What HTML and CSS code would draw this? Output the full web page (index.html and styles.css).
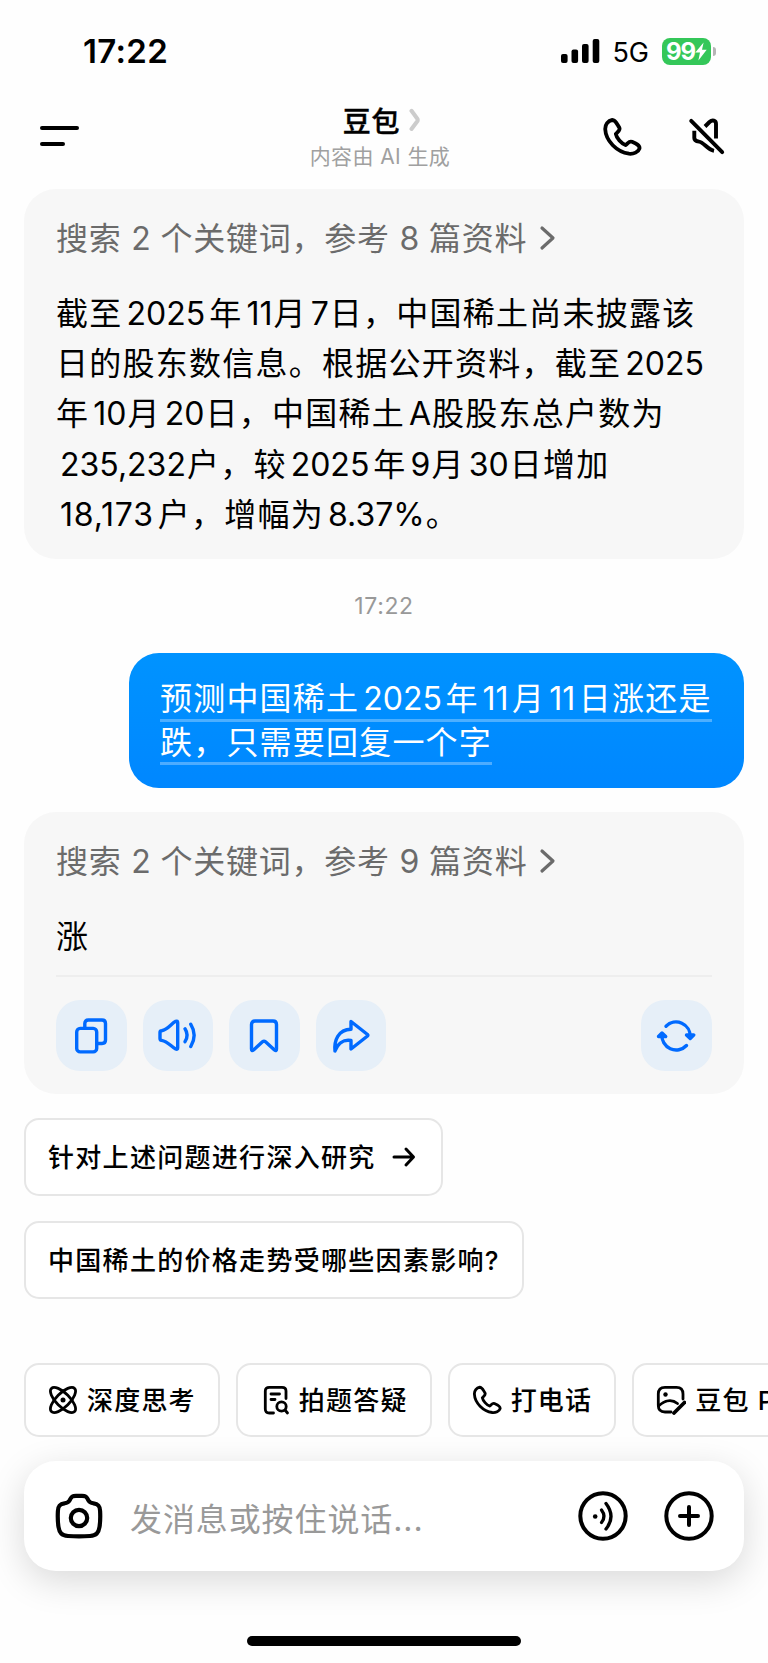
FILE: index.html
```html
<!DOCTYPE html>
<html lang="zh-CN">
<head>
  <meta charset="UTF-8" />
  <meta name="viewport" content="width=device-width, initial-scale=1.0"/>
  <title>豆包</title>
  <link rel="stylesheet" href="styles.css">
</head>
<body>
  <!-- Status bar -->
  <div class="status">
    <span class="status-time">17:22</span>
    <div class="status-right">
      <svg class="signal" width="39" height="24" viewBox="0 0 39 24">
        <rect x="0" y="15" width="6.6" height="9" rx="2"/>
        <rect x="10.5" y="10.5" width="6.6" height="13.5" rx="2"/>
        <rect x="21" y="5" width="6.6" height="19" rx="2"/>
        <rect x="31.7" y="0" width="6.6" height="24" rx="2"/>
      </svg>
      <span class="network">5G</span>
      <div class="battery">
        <span>99</span>
        <svg width="12" height="19" viewBox="0 0 12 19"><path d="M8.6 0.5 L0.3 10.6 H5 L3.4 18.5 L11.7 7.8 H7 Z" fill="#fff"/></svg>
      </div>
      <span class="battery-cap"></span>
    </div>
  </div>

  <!-- Header -->
  <header class="header">
    <button class="icon-button menu"><span></span><span></span></button>
    <div class="title-box">
      <h1 class="title">豆包
        <svg width="12" height="24" viewBox="0 0 12 24"><path d="M2.5 2.8 L8.500 11 Q9 12 8.500 13 L2.500 21" fill="none" stroke="#ccc" stroke-width="4" stroke-linecap="round" stroke-linejoin="round"/></svg>
      </h1>
      <p class="subtitle">内容由 AI 生成</p>
    </div>
    <div class="header-actions">
      <svg width="40" height="40" viewBox="0 0 40 40"><use href="#phone"/></svg>
      <svg width="40" height="40" viewBox="0 0 40 40" fill="none" stroke="#000" stroke-width="3.9" stroke-linecap="round" stroke-linejoin="round">
        <path d="M4.200 3.800 L35.200 35.200"/>
        <path d="M18 9.500 L22.500 5 C25.500 2.300 29 3.400 29 7 V21.500" stroke-linecap="butt"/>
        <path d="M7.300 13.800 V21 C7.300 23.700 9 24.300 12 24.600 C17 25.200 20 32.500 27 33.800" stroke-linecap="butt"/>
      </svg>
    </div>
  </header>

  <main class="chat">
    <section class="card card-first">
      <div class="sources">
        <span>搜索 <i>2</i> 个关键词，参考 <i>8</i> 篇资料</span>
        <svg width="18" height="26" viewBox="0 0 18 26"><path d="M3 3 L14 13 L3 23"/></svg>
      </div>
      <div class="answer">
        <div>截至<i>2025</i>年<i class="short-num">11</i>月<i class="short-num">7</i>日，中国稀土尚未披露该</div>
        <div>日的股东数信息。根据公开资料，截至<i>2025</i></div>
        <div>年<i class="short-num">10</i>月<i class="short-num">20</i>日，中国稀土<i class="short-num">A</i>股股东总户数为</div>
        <div><i class="short-num">235,232</i>户，较<i>2025</i>年<i class="short-num">9</i>月<i class="short-num">30</i>日增加</div>
        <div><i class="loose-num">18,173</i>户，增幅为<i class="short-num">8.37%</i>。</div>
      </div>
    </section>

    <p class="time">17:22</p>

    <div class="bubble">
      <div><span>预测中国稀土<i>2025</i>年<i>11</i>月<i>11</i>日涨还是</span></div>
      <div><span>跌，只需要回复一个字</span></div>
    </div>

    <section class="card card-second">
      <div class="sources">
        <span>搜索 <i>2</i> 个关键词，参考 <i>9</i> 篇资料</span>
        <svg width="18" height="26" viewBox="0 0 18 26"><path d="M3 3 L14 13 L3 23"/></svg>
      </div>
      <div class="answer short">涨</div>
      <div class="actions">
        <button class="action">
          <svg viewBox="0 0 40 40"><rect x="5.700" y="13.400" width="20" height="23.500" rx="3.500"/><path d="M13.800 12.500 V8.500 Q13.800 5 17.300 5 H31 Q34.500 5 34.500 8.500 V25 Q34.500 28.500 31 28.500 H27"/></svg>
        </button>
        <button class="action">
          <svg viewBox="0 0 40 40"><path d="M3 17.500 Q3 15.900 4.600 15.700 C11 14.700 14 8.700 18.700 6.300 Q20.700 5.500 20.700 7.700 V32.700 Q20.700 35 18.700 34 C14 31.500 11 26.500 4.600 25.300 Q3 25 3 23.400 Z"/><path d="M28 13.800 Q32.200 20.200 28 26.700"/><path d="M33.800 9.300 Q40.500 20 33.800 31.500"/></svg>
        </button>
        <button class="action">
          <svg viewBox="0 0 40 40"><path d="M7.500 9.500 Q7.500 6 11 6 H29 Q32.500 6 32.500 9.500 V34 Q32.500 36.500 30.500 35 L21.500 26.800 Q20 25.500 18.500 26.800 L9.500 35 Q7.500 36.500 7.500 34 Z"/></svg>
        </button>
        <button class="action">
          <svg viewBox="0 0 40 40"><path d="M20 6.500 L36.500 19.500 Q37.300 20.300 36.500 21 L20 34 V25.500 C12 24 6.500 29 4 36 C3 26 7 14.500 20 14.300 Z"/></svg>
        </button>
        <button class="action refresh">
          <svg viewBox="0 0 40 40"><path d="M10 11.200 A14.200 14.200 0 0 1 34.200 22"/><path d="M30.500 20 L34.200 23.500 L37.700 20 Z"/><path d="M30.500 30.500 A14.200 14.200 0 0 1 6 19.500"/><path d="M2.500 21.500 L6 18 L9.700 21.500 Z"/></svg>
        </button>
      </div>
    </section>

    <div class="suggestion first">针对上述问题进行深入研究
      <svg width="24" height="24" viewBox="0 0 24 24"><path d="M2 12 H21 M14 4 L21.500 12 L14 20"/></svg>
    </div>
    <div class="suggestion second">中国稀土的价格走势受哪些因素影响?</div>
  </main>

  <!-- Shortcuts, scroll off to the right -->
  <nav class="shortcuts">
    <div class="shortcut">
      <svg width="30" height="30" viewBox="0 0 30 30"><g transform="translate(15 15)"><ellipse rx="16.400" ry="6.800" transform="rotate(45)"/><ellipse rx="16.400" ry="6.800" transform="rotate(-45)"/><circle r="2.500" fill="#000" stroke="none"/></g></svg>
      <span>深度思考</span>
    </div>
    <div class="shortcut">
      <svg width="30" height="30" viewBox="0 0 30 30"><path d="M13.500 28 H9.300 Q5.300 28 5.300 24 V6 Q5.300 2.300 9.300 2.300 H22 Q26 2.300 26 6 V13.500"/><path d="M11 9 H19.500 M11 14.500 H15"/><circle cx="21.500" cy="21.500" r="4.700"/><path d="M25 25 L27.500 28"/></svg>
      <span>拍题答疑</span>
    </div>
    <div class="shortcut">
      <svg width="30" height="30" viewBox="0 0 40 40"><use href="#phone"/></svg>
      <span>打电话</span>
    </div>
    <div class="shortcut">
      <svg width="30" height="30" viewBox="0 0 30 30"><path d="M15 27 H9 Q2.300 27 2.300 20.300 V9 Q2.300 2.300 9 2.300 H20.500 Q27 2.300 27 9 V14"/><path d="M2.500 21 C9 15 16 14 21.500 18.500"/><circle cx="9.500" cy="9.500" r="2.200" fill="#000" stroke="none"/><path d="M18 28 L28.500 17.500" stroke-width="3.800"/></svg>
      <span>豆包 P</span>
    </div>
  </nav>

  <!-- Message input -->
  <footer class="composer">
    <svg width="50" height="50" viewBox="0 0 50 50" fill="none" stroke="#000" stroke-width="4.200" stroke-linejoin="round">
      <path d="M15.500 9.500 C17.500 5.500 18.500 4.800 22 4.800 H28 C31.500 4.800 32.500 5.500 34.500 9.500 C36 12 37 12 39.500 12.300 C44.500 13 46 15.500 46.100 20 C46.400 26 46.500 30 45.500 36 C44.500 42 42.500 44.500 36 45 C29 45.600 21 45.600 14 45 C7.500 44.500 5.500 42 4.500 36 C3.500 30 3.600 26 3.900 20 C4 15.500 5.500 13 10.500 12.300 C13 12 14 12 15.500 9.500 Z"/>
      <circle cx="25" cy="27" r="8.200"/>
    </svg>
    <span class="placeholder">发消息或按住说话...</span>
    <svg class="voice" width="50" height="50" viewBox="0 0 50 50" fill="none" stroke="#000" stroke-linecap="round">
      <circle cx="25" cy="25" r="22.700" stroke-width="4"/>
      <circle cx="17.200" cy="25.500" r="2.300" fill="#000" stroke="none"/>
      <path d="M23.500 19 Q28.500 25.500 23.500 31.500" stroke-width="3.300"/>
      <path d="M28 12.500 Q38 25.500 28 38" stroke-width="3.300"/>
    </svg>
    <svg width="50" height="50" viewBox="0 0 50 50" fill="none" stroke="#000" stroke-width="4" stroke-linecap="round">
      <circle cx="25" cy="25" r="22.700"/>
      <path d="M16 25 H34 M25 16 V34"/>
    </svg>
  </footer>

  <div class="home-bar"></div>

  <!-- Shared phone icon -->
  <svg width="0" height="0">
    <symbol id="phone" viewBox="0 0 40 40">
      <path d="M3.200 12 C3 8 6 3.500 10.200 3 C13.500 2.800 15 7 17.300 10.500 C18.800 13 15.500 15 13.800 17 C14.500 21 19.500 26.500 23.500 28 C26 26.500 27 23.500 30 24.800 C33.500 26.300 38 28 37.500 31.500 C36.500 35 31.500 37.200 27 36.700 C15 35 3.700 24 3.200 12 Z" fill="none" stroke="#000" stroke-width="3.800" stroke-linejoin="round"/>
    </symbol>
  </svg>
</body>
</html>
```
FILE: styles.css
```css
* {
  box-sizing: border-box;
}

body {
  font-family: Inter, "Noto Sans CJK SC", sans-serif;
  margin: 0;
  width: 768px;
  height: 1663px;
  overflow: hidden;
  background-color: #fefefe;
  color: #000;
}

svg {
  display: block;
  flex: none;
}

i {
  font-style: normal;
  letter-spacing: 0;
}

p, h1 {
  margin: 0;
}

button {
  border: none;
  padding: 0;
  background: none;
}

/* Status bar */
.status {
  height: 102px;
  padding: 0 52px 0 83px;
  display: flex;
  align-items: center;
  justify-content: space-between;
}

.status-time {
  font-size: 33px;
  font-weight: 600;
  letter-spacing: 0.3px;
}

.status-right {
  display: flex;
  align-items: center;
}

.network {
  margin: 2px 13px 0 12px;
  font-size: 27px;
}

.battery {
  width: 49px;
  height: 27px;
  border-radius: 8px;
  background-color: #34c759;
  color: white;
  font-size: 24px;
  font-weight: 700;
  letter-spacing: -1px;
  display: flex;
  align-items: center;
  justify-content: center;
}

.battery-cap {
  width: 3px;
  height: 9px;
  margin-left: 2px;
  border-radius: 0 3px 3px 0;
  background-color: #b5b5b5;
}

/* Header */
.header {
  height: 87px;
  padding: 0 40px;
  display: grid;
  grid-template-columns: 140px 1fr 140px;
}

.menu {
  height: 20px;
  margin-top: 24px;
  display: flex;
  flex-direction: column;
  justify-content: space-between;
}

.menu span {
  width: 39px;
  height: 4px;
  border-radius: 2px;
  background-color: #000;
}

.menu span:last-child {
  width: 25px;
}

.title-box {
  display: flex;
  flex-direction: column;
  align-items: center;
  padding-right: 8px;
}

.title {
  display: flex;
  align-items: center;
  gap: 9px;
  height: 36px;
  padding-left: 4px;
  font-size: 28px;
  font-weight: 500;
  letter-spacing: 0.8px;
  -webkit-text-stroke: 0.4px #000;
}

.subtitle {
  margin-top: 5px;
  font-size: 21px;
  line-height: 28px;
  letter-spacing: 0.4px;
  color: #a0a0a0;
}

.header-actions {
  display: flex;
  gap: 45px;
  margin: 15px 0 0 14px;
}

/* Chat */
.chat {
  display: flex;
  flex-direction: column;
  align-items: flex-start;
  height: 1174px;
  padding: 0 24px;
}

.card {
  width: 720px;
  padding: 25px 32px 0;
  border-radius: 32px;
  background-color: #f7f7f7;
}

.card-first {
  height: 370px;
}

.card-second {
  height: 282px;
  margin-top: 24px;
}

.sources {
  display: flex;
  align-items: center;
  gap: 12px;
  height: 50px;
  font-size: 32px;
  line-height: 50px;
  letter-spacing: 0.75px;
  color: #6b6b6b;
}

.sources span {
  white-space: nowrap;
}

.sources svg {
  margin-bottom: 2px;
  fill: none;
  stroke: #6b6b6b;
  stroke-width: 3.2;
  stroke-linecap: round;
  stroke-linejoin: round;
}

.answer {
  margin-top: 25px;
  font-size: 32px;
  line-height: 50.2px;
  letter-spacing: 1.25px;
  white-space: nowrap;
}

.answer i, .bubble i {
  margin: 0 4px;
}

.answer .short-num {
  margin-right: 1px;
}

.answer .loose-num {
  letter-spacing: 0.8px;
}

.answer.short {
  height: 49px;
}

.time {
  align-self: center;
  margin: 32px 0;
  font-size: 23px;
  line-height: 30px;
  letter-spacing: 0.6px;
  color: #999;
}

.bubble {
  align-self: flex-end;
  width: 615px;
  height: 135px;
  padding: 24px 32px 0 31px;
  border-radius: 30px;
  background: linear-gradient(#0093ff, #0087ff);
  color: white;
  font-size: 32px;
  line-height: 43.5px;
  letter-spacing: 1.2px;
  white-space: nowrap;
}

.bubble div {
  height: 43.5px;
}

.bubble span {
  display: inline-block;
  height: 44.5px;
  border-bottom: 3px solid rgba(255, 255, 255, 0.3);
}

.bubble i {
  margin-right: 3.5px;
}

.actions {
  display: flex;
  gap: 16px;
  margin-top: 14px;
  padding-top: 23px;
  border-top: 2px solid #eee;
}

.action {
  display: flex;
  align-items: center;
  justify-content: center;
  width: 70.6px;
  height: 71px;
  padding: 0 1px 1px 0;
  border-radius: 24px;
  background-color: #e6eff8;
}

.action svg {
  width: 40px;
  height: 40px;
  fill: none;
  stroke: #006aff;
  stroke-width: 3.4;
  stroke-linecap: round;
  stroke-linejoin: round;
}

.refresh {
  margin-left: auto;
}

.suggestion {
  display: flex;
  align-items: center;
  gap: 16px;
  height: 78px;
  padding: 0 22px 4px;
  border: 2px solid #e6e6e6;
  border-radius: 15px;
  background-color: white;
  font-size: 26px;
  font-weight: 500;
  letter-spacing: 1.3px;
  white-space: nowrap;
}

.suggestion svg {
  margin-top: 4px;
  fill: none;
  stroke: #000;
  stroke-width: 3;
  stroke-linecap: round;
  stroke-linejoin: round;
}

.suggestion.first {
  width: 419px;
  margin-top: 24px;
}

.suggestion.second {
  width: 500px;
  margin-top: 25px;
}

/* Shortcuts */
.shortcuts {
  display: flex;
  gap: 16px;
  width: 768px;
  padding-left: 24px;
  overflow: hidden;
}

.shortcut {
  flex: none;
  display: flex;
  align-items: center;
  gap: 9px;
  height: 74px;
  padding: 0 22px;
  border: 2px solid #e6e6e6;
  border-radius: 15px;
  background-color: white;
  font-size: 26px;
  font-weight: 500;
  letter-spacing: 1.2px;
  white-space: nowrap;
}

.shortcut span {
  padding-bottom: 3px;
}

.shortcut svg {
  fill: none;
  stroke: #000;
  stroke-width: 2.8;
  stroke-linecap: round;
  stroke-linejoin: round;
}

/* Input */
.composer {
  display: flex;
  align-items: center;
  width: 720px;
  height: 110px;
  margin: 24px 24px 0;
  padding: 0 30px;
  border-radius: 32px;
  background-color: white;
  box-shadow: 0 10px 36px rgba(0, 0, 0, 0.15);
}

.placeholder {
  flex: 1;
  margin: 1px 0 0 26px;
  font-size: 32px;
  letter-spacing: 0.9px;
  color: #999;
}

.voice {
  margin-right: 36px;
}

.home-bar {
  width: 274px;
  height: 10px;
  margin: 65px auto 0;
  border-radius: 5px;
  background-color: #000;
}
```
